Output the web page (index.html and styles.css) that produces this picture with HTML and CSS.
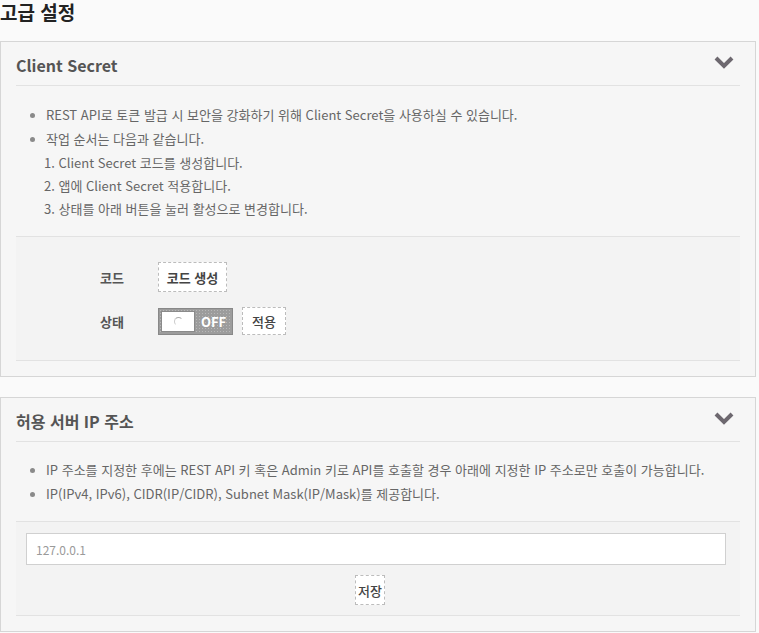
FILE: index.html
```html
<!DOCTYPE html>
<html lang="ko">
<head>
<meta charset="utf-8">
<title>고급 설정</title>
<link rel="stylesheet" href="styles.css">
</head>
<body>
<h1 class="page-title">고급 설정</h1>

<section class="panel">
  <div class="panel-head">
    <h2 class="panel-title">Client Secret</h2>
    <svg class="chevron" width="20" height="13" viewBox="0 0 20 13"><polyline points="2,2 10,10 18,2" fill="none" stroke="#6d686f" stroke-width="4"/></svg>
  </div>
  <div class="desc">
    <ul class="bullets">
      <li>REST API로 토큰 발급 시 보안을 강화하기 위해 Client Secret을 사용하실 수 있습니다.</li>
      <li>작업 순서는 다음과 같습니다.</li>
    </ul>
    <ol class="steps">
      <li>1. Client Secret 코드를 생성합니다.</li>
      <li>2. 앱에 Client Secret 적용합니다.</li>
      <li>3. 상태를 아래 버튼을 눌러 활성으로 변경합니다.</li>
    </ol>
  </div>
  <div class="settings">
    <div class="row">
      <span class="label">코드</span>
      <button class="btn btn-code">코드 생성</button>
    </div>
    <div class="row">
      <span class="label">상태</span>
      <div class="toggle">
        <span class="knob"><span class="spinner"></span></span>
        <span class="toggle-text">OFF</span>
      </div>
      <button class="btn btn-apply">적용</button>
    </div>
  </div>
</section>

<section class="panel panel-ip">
  <div class="panel-head">
    <h2 class="panel-title">허용 서버 IP 주소</h2>
    <svg class="chevron" width="20" height="13" viewBox="0 0 20 13"><polyline points="2,2 10,10 18,2" fill="none" stroke="#6d686f" stroke-width="4"/></svg>
  </div>
  <div class="desc desc-ip">
    <ul class="bullets">
      <li>IP 주소를 지정한 후에는 REST API 키 혹은 Admin 키로 API를 호출할 경우 아래에 지정한 IP 주소로만 호출이 가능합니다.</li>
      <li>IP(IPv4, IPv6), CIDR(IP/CIDR), Subnet Mask(IP/Mask)를 제공합니다.</li>
    </ul>
  </div>
  <div class="settings settings-ip">
    <input class="ip-input" type="text" value="127.0.0.1">
    <div class="save-wrap">
      <button class="btn btn-save">저장</button>
    </div>
  </div>
</section>
</body>
</html>
```

FILE: styles.css
```css
* { box-sizing: border-box; }

body {
  margin: 0;
  background: #fafafa;
  font-family: "Noto Sans CJK KR", "Noto Sans", sans-serif;
  color: #666;
  width: 759px;
}

.page-title {
  margin: 0;
  height: 41px;
  padding-top: 1px;
  font-size: 19px;
  line-height: 22px;
  font-weight: 700;
  color: #222;
}

.panel {
  width: 756px;
  border: 1px solid #d6d6d6;
  background: #f6f6f6;
  padding: 0 15px 15px;
}

.panel-ip {
  margin-top: 20px;
}

.panel-head {
  display: flex;
  align-items: center;
  justify-content: space-between;
  height: 44px;
  padding: 11px 0 8px;
  border-bottom: 1px solid #e2e2e2;
}

.panel-title {
  margin: 0;
  font-size: 16px;
  line-height: 24px;
  font-weight: 700;
  color: #555;
}

.chevron {
  display: block;
  margin-right: 6px;
  margin-top: -6px;
}

.desc {
  padding: 17px 0 16px;
  font-size: 13px;
  color: #666;
}

.desc-ip {
  padding: 16px 0 15px;
}

.bullets {
  margin: 0;
  padding: 0 0 0 30px;
  list-style: none;
}

.bullets li {
  position: relative;
  line-height: 24px;
}

.bullets li::before {
  content: "";
  position: absolute;
  left: -16px;
  top: 10px;
  width: 5px;
  height: 5px;
  border-radius: 50%;
  background: #8a8a8a;
}

.steps {
  margin: 0;
  padding: 0 0 0 28px;
  list-style: none;
}

.steps li {
  line-height: 23px;
}

.settings {
  border-top: 1px solid #e2e2e2;
  border-bottom: 1px solid #e2e2e2;
  background: #f3f3f3;
  padding: 25px 0 25px 84px;
  display: flex;
  flex-direction: column;
  gap: 15px;
}

.row {
  display: flex;
  align-items: center;
}

.label {
  width: 58px;
  font-size: 13px;
  font-weight: 700;
  color: #555;
}

.btn {
  font-family: "Noto Sans CJK KR", "Noto Sans", sans-serif;
  background: #fff;
  border: 1px dashed #bcbcbc;
  color: #444;
  font-size: 13px;
  font-weight: 700;
  height: 30px;
  padding: 0;
  cursor: pointer;
}

.btn-code { width: 69px; }

.btn-apply {
  width: 44px;
  height: 28px;
  margin-left: 9px;
  font-weight: 500;
}

.toggle {
  display: flex;
  align-items: center;
  width: 75px;
  height: 27px;
  border: 1px solid #888;
  background-color: #9c9c9c;
  background-image: radial-gradient(#b8b8b8 0.6px, transparent 0.8px);
  background-size: 3px 3px;
  padding: 2px;
}

.knob {
  display: flex;
  align-items: center;
  justify-content: center;
  width: 34px;
  height: 21px;
  background: #fff;
  border: 1px solid #8a8a8a;
}

.spinner {
  width: 9px;
  height: 9px;
  border-radius: 50%;
  border: 1px solid transparent;
  border-top-color: #aaa;
  border-left-color: #ccc;
}

.toggle-text {
  margin-left: 6px;
  color: #fff;
  font-size: 13px;
  font-weight: 700;
}

.settings-ip {
  padding: 11px 15px 10px 10px;
  gap: 10px;
}

.ip-input {
  width: 700px;
  height: 32px;
  border: 1px solid #d0d0d0;
  background: #fff;
  padding: 0 9px;
  font-family: "Noto Sans CJK KR", "Noto Sans", sans-serif;
  font-size: 12px;
  color: #9a9a9a;
  outline: none;
}

.save-wrap {
  padding-left: 329px;
}

.btn-save {
  width: 30px;
  height: 30px;
  font-weight: 500;
}
```
